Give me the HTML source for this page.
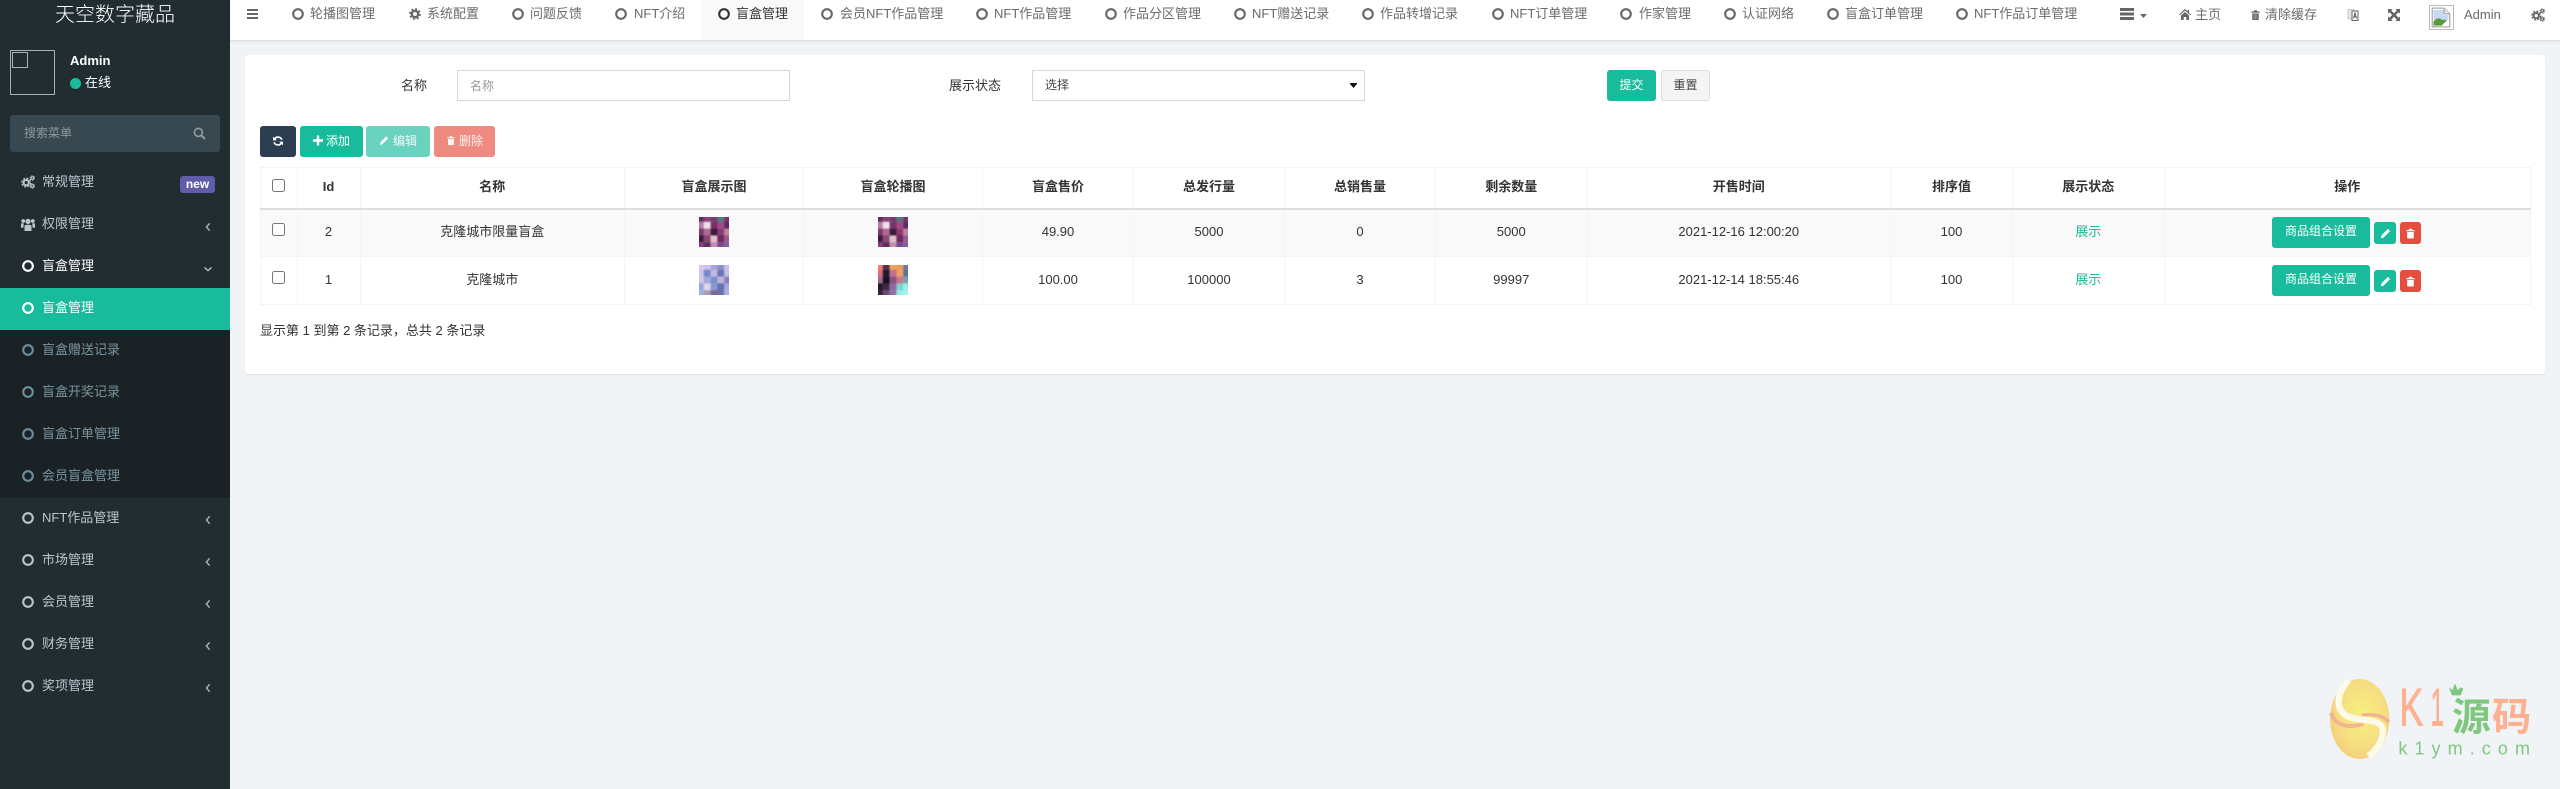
<!DOCTYPE html>
<html lang="zh-CN">
<head>
<meta charset="utf-8">
<title>盲盒管理</title>
<style>
*{box-sizing:border-box}
html,body{margin:0;padding:0}
body{width:2560px;height:789px;overflow:hidden;position:relative;background:#f1f4f6;font-family:"Liberation Sans","Noto Sans CJK SC",sans-serif;font-size:13px;color:#333}
.a,.t,svg.i{position:absolute}
.t{white-space:nowrap;line-height:20px;height:20px}
svg{display:block}
#side{position:absolute;left:0;top:0;width:230px;height:789px;background:#222d32}
#sub{position:absolute;left:0;top:330px;width:230px;height:168px;background:#1a2226}
#act{position:absolute;left:0;top:288px;width:230px;height:42px;background:#18bc9c}
.m{color:#b8c7ce;left:42px}
.s{color:#7b95a0;left:42px}
#nav{position:absolute;left:230px;top:0;width:2330px;height:40px;background:#fff;box-shadow:0 1px 2px rgba(0,0,0,.13)}
.n{color:#6b6b6b}
#card{position:absolute;left:245px;top:55px;width:2300px;height:319px;background:#fff;border-radius:3px;box-shadow:0 1px 1px rgba(0,0,0,.08)}
.inp{position:absolute;height:31px;border:1px solid #d2d6de;background:#fff}
.btn{position:absolute;border-radius:3px;color:#fff;font-size:12px;line-height:20px;white-space:nowrap}
table{position:absolute;left:260px;top:167px;width:2270px;table-layout:fixed;border-collapse:collapse;font-size:13px;color:#333}
th,td{border:1px solid #f4f4f4;text-align:center;vertical-align:top;line-height:20px;padding:0;white-space:nowrap}
th{height:41px;padding-top:9px;border-bottom:2px solid #ddd;font-weight:bold}
td{height:48px;padding-top:12px}
tr.o td{background:#f9f9f9}
tr.e td{padding-top:13px}
input[type=checkbox]{position:absolute;margin:0;width:13px;height:13px}
.th{position:absolute;width:30px;height:30px;overflow:hidden}
.th svg{position:absolute;left:-2px;top:-2px;width:34px;height:34px;filter:blur(.9px)}
</style>
</head>
<body>
<svg width="0" height="0" style="position:absolute">
<defs>
<symbol id="c" viewBox="0 0 12 12"><circle cx="6" cy="6" r="4.8" fill="none" stroke="currentColor" stroke-width="2.1"/></symbol>
<symbol id="l" viewBox="0 0 8 12"><path d="M5.6 2.4 2.4 6l3.2 3.6" fill="none" stroke="currentColor" stroke-width="1.4"/></symbol>
<symbol id="tr" viewBox="0 0 12 12"><path d="M1.5 2.2h9v1.3h-9zM4 2.2l.6-1.4h2.8L8 2.2zM2.4 4.3h7.2v6.2q0 1-1 1H3.4q-1 0-1-1z" fill="currentColor"/><path d="M4.4 5.3v5M6 5.3v5M7.6 5.3v5" stroke="#fff" stroke-opacity=".45" stroke-width=".7"/></symbol>
<symbol id="p" viewBox="0 0 12 12"><path d="M8.6 1 11 3.4 4 10.5 1 11.2l.7-3.1z" fill="currentColor"/></symbol>
<symbol id="g" viewBox="0 0 14 14"><g fill="none" stroke="currentColor"><circle cx="5.2" cy="7.6" r="2.6" stroke-width="2"/><circle cx="5.2" cy="7.6" r="4.3" stroke-width="1.4" stroke-dasharray="2 1.38"/><circle cx="11.3" cy="3" r="1.3" stroke-width="1.2"/><circle cx="11.3" cy="3" r="2.3" stroke-width=".9" stroke-dasharray="1.2 1.2"/><circle cx="11.3" cy="11" r="1.3" stroke-width="1.2"/><circle cx="11.3" cy="11" r="2.3" stroke-width=".9" stroke-dasharray="1.2 1.2"/></g></symbol>
<symbol id="th1" viewBox="0 0 5 5"><g>
<rect width="1.02" height="1.02" fill="#5d2f5c"/><rect x="1" width="1.02" height="1.02" fill="#8a3f78"/><rect x="2" width="1.02" height="1.02" fill="#6f3e70"/><rect x="3" width="1.02" height="1.02" fill="#4f7a80"/><rect x="4" width="1" height="1.02" fill="#7a2f6a"/>
<rect y="1" width="1.02" height="1.02" fill="#b87fa8"/><rect x="1" y="1" width="1.02" height="1.02" fill="#f0e0ea"/><rect x="2" y="1" width="1.02" height="1.02" fill="#7a3068"/><rect x="3" y="1" width="1.02" height="1.02" fill="#a04a80"/><rect x="4" y="1" width="1" height="1.02" fill="#5a2a60"/>
<rect y="2" width="1.02" height="1.02" fill="#7a3a6c"/><rect x="1" y="2" width="1.02" height="1.02" fill="#b06a90"/><rect x="2" y="2" width="1.02" height="1.02" fill="#3a1a3a"/><rect x="3" y="2" width="1.02" height="1.02" fill="#8a3a70"/><rect x="4" y="2" width="1" height="1.02" fill="#c080a0"/>
<rect y="3" width="1.02" height="1.02" fill="#3a1a40"/><rect x="1" y="3" width="1.02" height="1.02" fill="#8a4a70"/><rect x="2" y="3" width="1.02" height="1.02" fill="#e0c0c8"/><rect x="3" y="3" width="1.02" height="1.02" fill="#6a2a5a"/><rect x="4" y="3" width="1" height="1.02" fill="#9a5a90"/>
<rect y="4" width="1.02" height="1" fill="#8a3a80"/><rect x="1" y="4" width="1.02" height="1" fill="#5a2a60"/><rect x="2" y="4" width="1.02" height="1" fill="#c090b0"/><rect x="3" y="4" width="1.02" height="1" fill="#7a4a90"/><rect x="4" y="4" width="1" height="1" fill="#8a5aa0"/>
</g></symbol>
</defs>
</svg>

<!-- SIDEBAR -->
<div id="side">
  <div class="t" style="left:0;width:230px;top:1px;height:28px;line-height:28px;text-align:center;font-size:20px;color:#fff;font-weight:300">天空数字藏品</div>
  <div class="a" style="left:10px;top:50px;width:45px;height:45px;border:1px solid #a9b0b3"></div>
  <div class="a" style="left:12px;top:52px;width:16px;height:16px;border:1px solid #a9b0b3"></div>
  <div class="t" style="left:70px;top:51px;font-weight:bold;color:#fff">Admin</div>
  <div class="a" style="left:70px;top:78px;width:11px;height:11px;border-radius:50%;background:#18bc9c"></div>
  <div class="t" style="left:85px;top:73px;color:#fff">在线</div>
  <div class="a" style="left:10px;top:115px;width:210px;height:37px;background:#374850;border-radius:3px"></div>
  <div class="t" style="left:24px;top:123px;font-size:12px;color:#8f9a9f">搜索菜单</div>
  <svg class="i" style="left:193px;top:127px" width="13" height="13" viewBox="0 0 13 13"><circle cx="5.4" cy="5.4" r="4" fill="none" stroke="#8f9a9f" stroke-width="1.7"/><path d="M8.4 8.4 12 12" stroke="#8f9a9f" stroke-width="2"/></svg>

  <div id="act"></div>
  <div id="sub"></div>

  <svg class="i" style="left:21px;top:175px;color:#b8c7ce" width="14" height="14"><use href="#g"/></svg>
  <div class="t m" style="top:172px">常规管理</div>
  <div class="a" style="left:180px;top:176px;width:35px;height:17px;border-radius:3px;background:#605ca8;color:#fff;font-size:12px;font-weight:bold;line-height:16px;text-align:center">new</div>

  <svg class="i" style="left:21px;top:218px" width="14" height="13" viewBox="0 0 14 13"><g fill="#b8c7ce"><circle cx="7" cy="3.4" r="2.6"/><circle cx="2.2" cy="3" r="1.9"/><circle cx="11.8" cy="3" r="1.9"/><path d="M3.5 7.4q3.5-1.6 7 0V13H3.5zM0 5.6q1.2-.6 2.8-.2l-.4 4.4H0zM14 5.6q-1.2-.6-2.8-.2l.4 4.4H14z"/></g></svg>
  <div class="t m" style="top:214px">权限管理</div>
  <svg class="i" style="left:204px;top:221px;color:#a5b5bc" width="8" height="12"><use href="#l"/></svg>

  <svg class="i" style="left:22px;top:260px;color:#fff" width="12" height="12"><use href="#c"/></svg>
  <div class="t m" style="top:256px;color:#fff">盲盒管理</div>
  <svg class="i" style="left:202px;top:265px" width="12" height="8" viewBox="0 0 12 8"><path d="M2.400 2.400 6 5.600 9.600 2.400" fill="none" stroke="#b8c7ce" stroke-width="1.4"/></svg>

  <svg class="i" style="left:22px;top:302px;color:#fff" width="12" height="12"><use href="#c"/></svg>
  <div class="t s" style="top:298px;color:#fff">盲盒管理</div>

  <svg class="i" style="left:22px;top:344px;color:#6f8d9b" width="12" height="12"><use href="#c"/></svg>
  <div class="t s" style="top:340px">盲盒赠送记录</div>
  <svg class="i" style="left:22px;top:386px;color:#6f8d9b" width="12" height="12"><use href="#c"/></svg>
  <div class="t s" style="top:382px">盲盒开奖记录</div>
  <svg class="i" style="left:22px;top:428px;color:#6f8d9b" width="12" height="12"><use href="#c"/></svg>
  <div class="t s" style="top:424px">盲盒订单管理</div>
  <svg class="i" style="left:22px;top:470px;color:#6f8d9b" width="12" height="12"><use href="#c"/></svg>
  <div class="t s" style="top:466px">会员盲盒管理</div>

  <svg class="i" style="left:22px;top:512px;color:#b8c7ce" width="12" height="12"><use href="#c"/></svg>
  <div class="t m" style="top:508px">NFT作品管理</div>
  <svg class="i" style="left:204px;top:514px;color:#a5b5bc" width="8" height="12"><use href="#l"/></svg>

  <svg class="i" style="left:22px;top:554px;color:#b8c7ce" width="12" height="12"><use href="#c"/></svg>
  <div class="t m" style="top:550px">市场管理</div>
  <svg class="i" style="left:204px;top:556px;color:#a5b5bc" width="8" height="12"><use href="#l"/></svg>

  <svg class="i" style="left:22px;top:596px;color:#b8c7ce" width="12" height="12"><use href="#c"/></svg>
  <div class="t m" style="top:592px">会员管理</div>
  <svg class="i" style="left:204px;top:598px;color:#a5b5bc" width="8" height="12"><use href="#l"/></svg>

  <svg class="i" style="left:22px;top:638px;color:#b8c7ce" width="12" height="12"><use href="#c"/></svg>
  <div class="t m" style="top:634px">财务管理</div>
  <svg class="i" style="left:204px;top:640px;color:#a5b5bc" width="8" height="12"><use href="#l"/></svg>

  <svg class="i" style="left:22px;top:680px;color:#b8c7ce" width="12" height="12"><use href="#c"/></svg>
  <div class="t m" style="top:676px">奖项管理</div>
  <svg class="i" style="left:204px;top:682px;color:#a5b5bc" width="8" height="12"><use href="#l"/></svg>
</div>

<!-- TOP NAV -->
<div id="nav"></div>
<div class="a" style="left:701px;top:0;width:103px;height:40px;background:#f9f9f9"></div>
<svg class="i" style="left:247px;top:9px" width="11" height="10" viewBox="0 0 11 10"><path d="M0 0h11v2H0zM0 4h11v2H0zM0 8h11v2H0z" fill="#666"/></svg>

<svg class="i" style="left:292px;top:8px;color:#666" width="12" height="12"><use href="#c"/></svg><div class="t n" style="left:310px;top:4px">轮播图管理</div>
<svg class="i" style="left:409px;top:8px" width="12" height="12" viewBox="0 0 12 12"><circle cx="6" cy="6" r="3.2" fill="none" stroke="#666" stroke-width="2.4"/><circle cx="6" cy="6" r="5.1" fill="none" stroke="#666" stroke-width="1.6" stroke-dasharray="2 2"/></svg><div class="t n" style="left:427px;top:4px">系统配置</div>
<svg class="i" style="left:512px;top:8px;color:#666" width="12" height="12"><use href="#c"/></svg><div class="t n" style="left:530px;top:4px">问题反馈</div>
<svg class="i" style="left:615px;top:8px;color:#666" width="12" height="12"><use href="#c"/></svg><div class="t n" style="left:634px;top:4px">NFT介绍</div>
<svg class="i" style="left:718px;top:8px;color:#333" width="12" height="12"><use href="#c"/></svg><div class="t" style="left:736px;top:4px;color:#333">盲盒管理</div>
<svg class="i" style="left:821px;top:8px;color:#666" width="12" height="12"><use href="#c"/></svg><div class="t n" style="left:840px;top:4px">会员NFT作品管理</div>
<svg class="i" style="left:976px;top:8px;color:#666" width="12" height="12"><use href="#c"/></svg><div class="t n" style="left:994px;top:4px">NFT作品管理</div>
<svg class="i" style="left:1105px;top:8px;color:#666" width="12" height="12"><use href="#c"/></svg><div class="t n" style="left:1123px;top:4px">作品分区管理</div>
<svg class="i" style="left:1234px;top:8px;color:#666" width="12" height="12"><use href="#c"/></svg><div class="t n" style="left:1252px;top:4px">NFT赠送记录</div>
<svg class="i" style="left:1362px;top:8px;color:#666" width="12" height="12"><use href="#c"/></svg><div class="t n" style="left:1380px;top:4px">作品转增记录</div>
<svg class="i" style="left:1492px;top:8px;color:#666" width="12" height="12"><use href="#c"/></svg><div class="t n" style="left:1510px;top:4px">NFT订单管理</div>
<svg class="i" style="left:1620px;top:8px;color:#666" width="12" height="12"><use href="#c"/></svg><div class="t n" style="left:1639px;top:4px">作家管理</div>
<svg class="i" style="left:1724px;top:8px;color:#666" width="12" height="12"><use href="#c"/></svg><div class="t n" style="left:1742px;top:4px">认证网络</div>
<svg class="i" style="left:1827px;top:8px;color:#666" width="12" height="12"><use href="#c"/></svg><div class="t n" style="left:1845px;top:4px">盲盒订单管理</div>
<svg class="i" style="left:1956px;top:8px;color:#666" width="12" height="12"><use href="#c"/></svg><div class="t n" style="left:1974px;top:4px">NFT作品订单管理</div>

<svg class="i" style="left:2120px;top:8px" width="14" height="12" viewBox="0 0 14 12"><path d="M0 0h14v3H0zM0 4.500h14v3H0zM0 9h14v3H0z" fill="#666"/></svg>
<svg class="i" style="left:2140px;top:14px" width="7" height="4" viewBox="0 0 7 4"><path d="M0 0h7L3.500 4z" fill="#666"/></svg>
<svg class="i" style="left:2179px;top:9px" width="12" height="11" viewBox="0 0 12 11"><path d="M6 0 0 5.500l.7.8L6 1.600l5.300 4.700.7-.8-2-1.800V1H8.600v1.500zM2 6.500 6 3l4 3.500V11H7.300V8H4.700v3H2z" fill="#666"/></svg>
<div class="t n" style="left:2195px;top:5px">主页</div>
<svg class="i" style="left:2250px;top:9px;color:#666" width="11" height="12"><use href="#tr"/></svg>
<div class="t n" style="left:2265px;top:5px">清除缓存</div>
<svg class="i" style="left:2347px;top:8px" width="12" height="14" viewBox="0 0 12 14"><path d="M1 1.500h6v9.500H1z" fill="#e3e7ea" stroke="#b9bec2" stroke-width=".8"/><path d="M5 3h6v9.500H5z" fill="#fff" stroke="#666" stroke-width="1"/><path d="M6.500 10.500 8 5l1.500 5.500M7 8.800h2" fill="none" stroke="#555" stroke-width="1"/></svg>
<svg class="i" style="left:2388px;top:9px" width="12" height="12" viewBox="0 0 12 12"><path d="M0 0h4.600L3.200 1.400 6 4.200 8.800 1.400 7.400 0H12v4.600L10.600 3.200 7.800 6l2.800 2.800L12 7.400V12H7.400l1.400-1.400L6 7.800 3.200 10.600 4.600 12H0V7.400l1.400 1.400L4.200 6 1.400 3.200 0 4.600z" fill="#666"/></svg>
<div class="a" style="left:2429px;top:5px;width:25px;height:25px;border:1px solid #bbb;background:#fff"></div>
<svg class="i" style="left:2431px;top:7px" width="20" height="21" viewBox="0 0 16 16"><path d="M1 .5h9.500L15 5v10.500H1z" fill="#fff" stroke="#a9a9a9"/><path d="M10.500.5V5H15" fill="#e8e8e8" stroke="#a9a9a9"/><path d="M2 2h8v4h4v4H2z" fill="#c5d9f5"/><path d="M2 14.500V11q4-4 7-1 3-1 5 1v3.500z" fill="#5b9a3c"/><path d="M8 15 14 9v6z" fill="#fff"/></svg>
<div class="t n" style="left:2464px;top:5px">Admin</div>
<svg class="i" style="left:2531px;top:8px;color:#666" width="14" height="14"><use href="#g"/></svg>

<!-- CARD -->
<div id="card"></div>
<div class="t" style="left:401px;top:76px">名称</div>
<div class="inp" style="left:457px;top:70px;width:333px"></div>
<div class="t" style="left:470px;top:76px;font-size:12px;color:#999">名称</div>
<div class="t" style="left:949px;top:76px">展示状态</div>
<div class="inp" style="left:1032px;top:70px;width:333px"></div>
<div class="t" style="left:1045px;top:75px;font-size:12px;color:#444">选择</div>
<svg class="i" style="left:1350px;top:83px" width="7" height="5" viewBox="0 0 7 5"><path d="M0 0h7v1L3.500 5 0 1z" fill="#111"/></svg>
<div class="btn" style="left:1607px;top:70px;width:49px;height:31px;line-height:30px;text-align:center;background:#18bc9c">提交</div>
<div class="btn" style="left:1661px;top:70px;width:49px;height:31px;line-height:29px;text-align:center;background:#f4f4f4;border:1px solid #ddd;color:#444">重置</div>

<div class="btn" style="left:260px;top:126px;width:36px;height:31px;background:#2c3e50"></div>
<svg class="i" style="left:272px;top:135px" width="12" height="12" viewBox="0 0 12 12"><path d="M10.700 4.800A4.900 4.900 0 0 0 2.300 2.900L1 1.600V5.400H4.800L3.500 4.100A3.200 3.200 0 0 1 9 4.800zM1.300 7.200A4.900 4.900 0 0 0 9.700 9.100L11 10.400V6.600H7.200L8.500 7.900A3.200 3.200 0 0 1 3 7.200z" fill="#fff"/></svg>

<div class="btn" style="left:300px;top:126px;width:63px;height:31px;background:#18bc9c"></div>
<svg class="i" style="left:313px;top:135px" width="10" height="11" viewBox="0 0 10 10"><path d="M3.800 0h2.400v3.800H10v2.400H6.200V10H3.800V6.200H0V3.800h3.800z" fill="#fff"/></svg>
<div class="t" style="left:326px;top:131px;font-size:12px;color:#fff">添加</div>

<div class="btn" style="left:366px;top:126px;width:64px;height:31px;background:#18bc9c;opacity:.65"></div>
<svg class="i" style="left:379px;top:135px;color:#fff" width="10" height="11"><use href="#p"/></svg>
<div class="t" style="left:393px;top:131px;font-size:12px;color:#fff;opacity:.9">编辑</div>

<div class="btn" style="left:434px;top:126px;width:61px;height:31px;background:#e74c3c;opacity:.65"></div>
<svg class="i" style="left:446px;top:135px;color:#fff;opacity:.9" width="10" height="11"><use href="#tr"/></svg>
<div class="t" style="left:459px;top:131px;font-size:12px;color:#fff;opacity:.9">删除</div>

<!-- TABLE -->
<table>
<colgroup><col style="width:36.5px"><col style="width:63px"><col style="width:264.5px"><col style="width:179px"><col style="width:179px"><col style="width:151px"><col style="width:151px"><col style="width:151px"><col style="width:151.5px"><col style="width:303.5px"><col style="width:122px"><col style="width:151.5px"><col style="width:366.5px"></colgroup>
<thead><tr><th></th><th>Id</th><th>名称</th><th>盲盒展示图</th><th>盲盒轮播图</th><th>盲盒售价</th><th>总发行量</th><th>总销售量</th><th>剩余数量</th><th>开售时间</th><th>排序值</th><th>展示状态</th><th>操作</th></tr></thead>
<tbody>
<tr class="o"><td></td><td>2</td><td>克隆城市限量盲盒</td><td></td><td></td><td>49.90</td><td>5000</td><td>0</td><td>5000</td><td>2021-12-16 12:00:20</td><td>100</td><td style="color:#18bc9c">展示</td><td></td></tr>
<tr class="e"><td></td><td>1</td><td>克隆城市</td><td></td><td></td><td>100.00</td><td>100000</td><td>3</td><td>99997</td><td>2021-12-14 18:55:46</td><td>100</td><td style="color:#18bc9c">展示</td><td></td></tr>
</tbody>
</table>
<input type="checkbox" style="left:272px;top:179px">
<input type="checkbox" style="left:272px;top:223px">
<input type="checkbox" style="left:272px;top:271px">

<div class="th" style="left:699px;top:217px"><svg><use href="#th1"/></svg></div>
<div class="th" style="left:878px;top:217px"><svg><use href="#th1"/></svg></div>
<div class="th" style="left:699px;top:265px"><svg viewBox="0 0 5 5">
<rect width="1.02" height="1.02" fill="#d8c8f0"/><rect x="1" width="1.02" height="1.02" fill="#cfc0ee"/><rect x="2" width="1.02" height="1.02" fill="#a8a0d8"/><rect x="3" width="1.02" height="1.02" fill="#8a90c8"/><rect x="4" width="1" height="1.02" fill="#c8c0ec"/>
<rect y="1" width="1.02" height="1.02" fill="#d0c4ec"/><rect x="1" y="1" width="1.02" height="1.02" fill="#7088c8"/><rect x="2" y="1" width="1.02" height="1.02" fill="#c0b8e0"/><rect x="3" y="1" width="1.02" height="1.02" fill="#6a74b0"/><rect x="4" y="1" width="1" height="1.02" fill="#c8bce8"/>
<rect y="2" width="1.02" height="1.02" fill="#cfc4ec"/><rect x="1" y="2" width="1.02" height="1.02" fill="#a0a8d8"/><rect x="2" y="2" width="1.02" height="1.02" fill="#7a90d0"/><rect x="3" y="2" width="1.02" height="1.02" fill="#c0b4d8"/><rect x="4" y="2" width="1" height="1.02" fill="#8a80b8"/>
<rect y="3" width="1.02" height="1.02" fill="#90a8e0"/><rect x="1" y="3" width="1.02" height="1.02" fill="#e0d8e8"/><rect x="2" y="3" width="1.02" height="1.02" fill="#8898d0"/><rect x="3" y="3" width="1.02" height="1.02" fill="#6070b0"/><rect x="4" y="3" width="1" height="1.02" fill="#a8a8e0"/>
<rect y="4" width="1.02" height="1" fill="#a0b0e0"/><rect x="1" y="4" width="1.02" height="1" fill="#a89ab0"/><rect x="2" y="4" width="1.02" height="1" fill="#7a6a90"/><rect x="3" y="4" width="1.02" height="1" fill="#6a70a8"/><rect x="4" y="4" width="1" height="1" fill="#a8b0e8"/>
</svg></div>
<div class="th" style="left:878px;top:265px"><svg viewBox="0 0 5 5">
<rect width="1.02" height="1.02" fill="#f08070"/><rect x="1" width="1.02" height="1.02" fill="#503048"/><rect x="2" width="1.02" height="1.02" fill="#f0a060"/><rect x="3" width="1.02" height="1.02" fill="#f09850"/><rect x="4" width="1" height="1.02" fill="#6878b0"/>
<rect y="1" width="1.02" height="1.02" fill="#e06a80"/><rect x="1" y="1" width="1.02" height="1.02" fill="#201828"/><rect x="2" y="1" width="1.02" height="1.02" fill="#c07090"/><rect x="3" y="1" width="1.02" height="1.02" fill="#f0a060"/><rect x="4" y="1" width="1" height="1.02" fill="#5a70a0"/>
<rect y="2" width="1.02" height="1.02" fill="#a06890"/><rect x="1" y="2" width="1.02" height="1.02" fill="#181020"/><rect x="2" y="2" width="1.02" height="1.02" fill="#8a5080"/><rect x="3" y="2" width="1.02" height="1.02" fill="#c87888"/><rect x="4" y="2" width="1" height="1.02" fill="#7aa0b0"/>
<rect y="3" width="1.02" height="1.02" fill="#281828"/><rect x="1" y="3" width="1.02" height="1.02" fill="#402848"/><rect x="2" y="3" width="1.02" height="1.02" fill="#9068a0"/><rect x="3" y="3" width="1.02" height="1.02" fill="#80d0d0"/><rect x="4" y="3" width="1" height="1.02" fill="#98f0e8"/>
<rect y="4" width="1.02" height="1" fill="#302038"/><rect x="1" y="4" width="1.02" height="1" fill="#6a4878"/><rect x="2" y="4" width="1.02" height="1" fill="#9070a8"/><rect x="3" y="4" width="1.02" height="1" fill="#98f0e8"/><rect x="4" y="4" width="1" height="1" fill="#a0f4ec"/>
</svg></div>

<!-- Row actions -->
<div class="btn" style="left:2272px;top:217px;width:98px;height:31px;line-height:29px;text-align:center;background:#18bc9c">商品组合设置</div>
<div class="btn" style="left:2374px;top:222px;width:22px;height:22px;background:#18bc9c"></div>
<svg class="i" style="left:2380px;top:228px;color:#fff" width="11" height="11"><use href="#p"/></svg>
<div class="btn" style="left:2400px;top:222px;width:21px;height:22px;background:#e74c3c"></div>
<svg class="i" style="left:2405px;top:228px;color:#fff" width="11" height="11"><use href="#tr"/></svg>

<div class="btn" style="left:2272px;top:265px;width:98px;height:31px;line-height:29px;text-align:center;background:#18bc9c">商品组合设置</div>
<div class="btn" style="left:2374px;top:270px;width:22px;height:22px;background:#18bc9c"></div>
<svg class="i" style="left:2380px;top:276px;color:#fff" width="11" height="11"><use href="#p"/></svg>
<div class="btn" style="left:2400px;top:270px;width:21px;height:22px;background:#e74c3c"></div>
<svg class="i" style="left:2405px;top:276px;color:#fff" width="11" height="11"><use href="#tr"/></svg>

<div class="t" style="left:260px;top:321px">显示第 1 到第 2 条记录，总共 2 条记录</div>

<!-- WATERMARK -->
<svg class="i" style="left:2300px;top:660px" width="260" height="129" viewBox="0 0 780 387">
<defs>
<radialGradient id="eg" cx=".55" cy=".45" r=".7"><stop offset="0" stop-color="#f7f07e"/><stop offset=".6" stop-color="#f5dc80"/><stop offset="1" stop-color="#f2c37e"/></radialGradient>
</defs>
<ellipse cx="179" cy="177" rx="89" ry="120" fill="url(#eg)"/>
<path d="M93 158C105 198 145 205 190 192" fill="none" stroke="#efa695" stroke-width="12" stroke-opacity=".75"/>
<path d="M185 166C215 160 250 166 267 186" fill="none" stroke="#efa695" stroke-width="10" stroke-opacity=".8"/>
<path d="M146 60C112 98 105 140 134 164 166 186 228 172 246 200 256 226 236 264 206 288" fill="none" stroke="#fdfbe8" stroke-width="19"/>
<text x="298" y="197" font-family="Liberation Sans,sans-serif" font-size="158" fill="#fdb192" stroke="#fdb192" stroke-width="3" textLength="72" lengthAdjust="spacingAndGlyphs">K</text>
<text x="392" y="197" font-family="Liberation Sans,sans-serif" font-size="158" fill="#fdb192" stroke="#fdb192" stroke-width="3" textLength="40" lengthAdjust="spacingAndGlyphs">1</text>
<text x="456" y="212" font-family="Liberation Sans,'Noto Sans CJK SC',sans-serif" font-size="116" font-weight="bold" fill="#7fc77f">源</text>
<text x="576" y="212" font-family="Liberation Sans,'Noto Sans CJK SC',sans-serif" font-size="118" font-weight="bold" fill="#fdb192">码</text>
<path d="M448 82l9 8 8-20 8 20 9-8 8 4-8 20h-26l-8-20z" fill="#7fc77f"/>
<text x="295" y="283" font-family="Liberation Sans,sans-serif" font-size="54" fill="#7fc77f" textLength="395">k1ym.com</text>
</svg>
</body>
</html>
